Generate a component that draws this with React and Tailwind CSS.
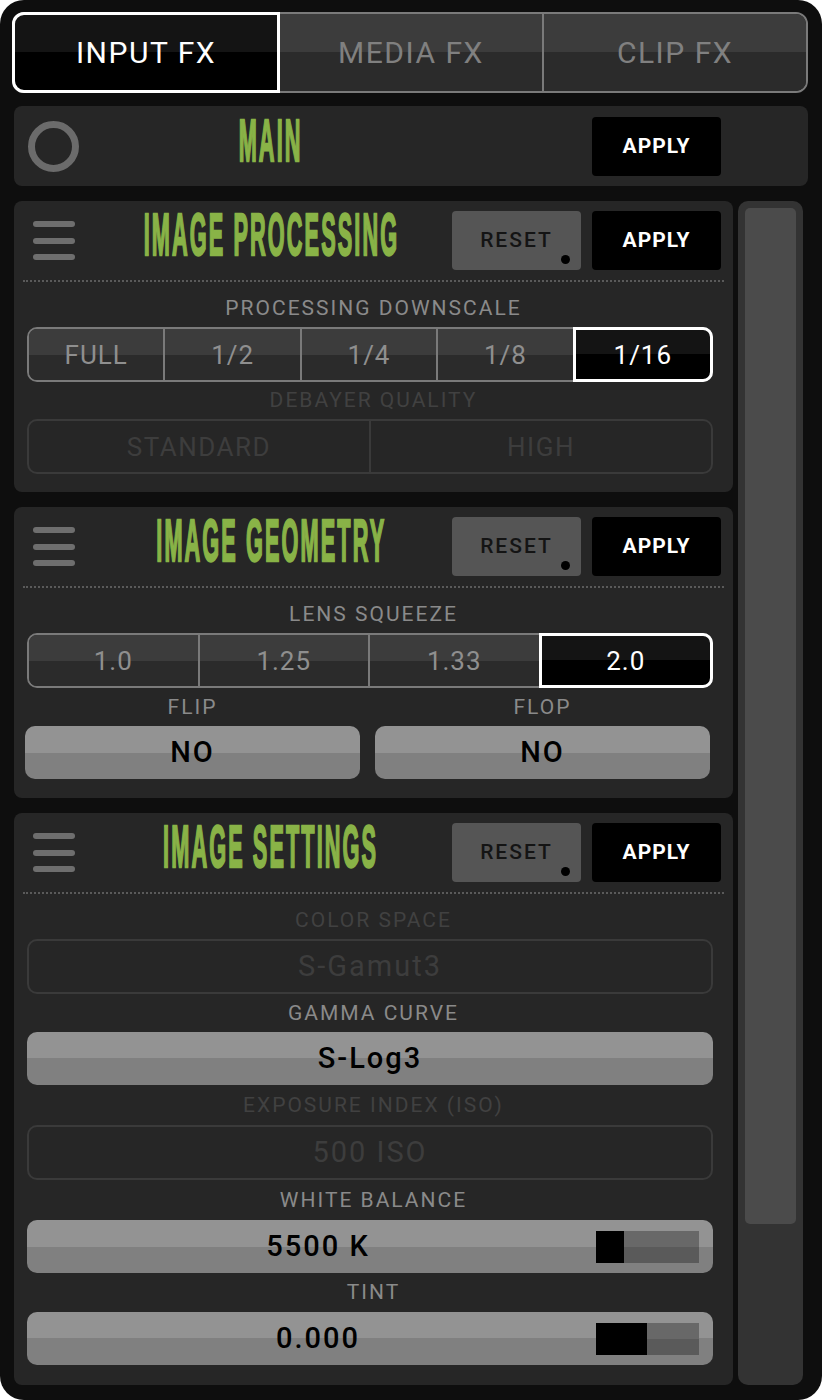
import React from "react";

const splitDark = "bg-[linear-gradient(to_bottom,#3c3c3c_50%,#2b2b2b_50%)]";
const splitBlack = "bg-[linear-gradient(to_bottom,#141414_50%,#000000_50%)]";
const splitLight = "bg-[linear-gradient(to_bottom,#939393_50%,#808080_50%)]";

function Title({ children }) {
  return (
    <div className="w-[362px] flex justify-center pb-[10px]">
      <span className="inline-block font-['Liberation_Sans',sans-serif] font-bold text-[31px] leading-none tracking-[3px] text-[#89b347] scale-x-[0.7] scale-y-[1.9] [-webkit-text-stroke:1.2px_#89b347] whitespace-nowrap">
        {children}
      </span>
    </div>
  );
}

function Hamburger() {
  return (
    <div className="w-[76px] pl-[19px] flex flex-col gap-[10.5px]">
      <div className="h-[6px] w-[42px] rounded-full bg-[#6e6e6e]" />
      <div className="h-[6px] w-[42px] rounded-full bg-[#6e6e6e]" />
      <div className="h-[6px] w-[42px] rounded-full bg-[#6e6e6e]" />
    </div>
  );
}

function ApplyButton() {
  return (
    <button className="w-[129px] h-[59px] rounded-[4px] bg-black text-white font-bold text-[21px] tracking-[1px] leading-none">
      APPLY
    </button>
  );
}

function ResetButton() {
  return (
    <button className="relative w-[129px] h-[59px] rounded-[4px] bg-[#555555] text-[#141414] font-medium text-[21px] tracking-[2px] leading-none">
      RESET
      <span className="absolute left-[109px] top-[44px] w-[9px] h-[9px] rounded-full bg-black" />
    </button>
  );
}

function PanelHeader({ title }) {
  return (
    <>
      <div className="flex items-center h-[59px] mt-[10px]">
        <Hamburger />
        <Title>{title}</Title>
        <ResetButton />
        <div className="w-[11px]" />
        <ApplyButton />
      </div>
      <div className="mt-[10px] ml-[9px] w-[701px] border-t-2 border-dotted border-[#5a5a5a]" />
      <div className="h-[7px]" />
    </>
  );
}

function Label({ children, h = "h-[38px]", disabled }) {
  return (
    <div
      className={
        h +
        " flex items-center justify-center text-[21px] leading-none tracking-[2px] " +
        (disabled ? "text-[#414141]" : "text-[#8a8a8a]")
      }
    >
      {children}
    </div>
  );
}

function Segmented({ items, selected }) {
  return (
    <div className="ml-[13px] w-[686px] h-[55px] flex rounded-[10px] border-2 border-[#7a7a7a]">
      {items.map((it, i) => {
        const isSel = i === selected;
        const isLast = i === items.length - 1;
        if (isSel) {
          return (
            <div
              key={it}
              className={
                "flex-1 -my-[2px] -mr-[2px] flex items-center justify-center border-[3px] border-white text-white text-[26px] tracking-[1px] leading-none " +
                splitBlack +
                (isLast ? " rounded-r-[10px]" : "")
              }
            >
              {it}
            </div>
          );
        }
        return (
          <div
            key={it}
            className={
              "flex-1 flex items-center justify-center text-[#8f8f8f] text-[26px] tracking-[1px] leading-none " +
              splitDark +
              (i === 0 ? " rounded-l-[8px]" : " border-l-2 border-[#7a7a7a]") +
              (isLast ? " rounded-r-[8px]" : "")
            }
          >
            {it}
          </div>
        );
      })}
    </div>
  );
}

function DisabledSegmented({ items }) {
  return (
    <div className="ml-[13px] w-[686px] h-[55px] flex rounded-[10px] border-2 border-[#3a3a3a]">
      {items.map((it, i) => (
        <div
          key={it}
          className={
            "flex-1 flex items-center justify-center text-[#3d3d3d] text-[26px] tracking-[1.5px] leading-none" +
            (i === 0 ? "" : " border-l-2 border-[#3a3a3a]")
          }
        >
          {it}
        </div>
      ))}
    </div>
  );
}

function DisabledBox({ children }) {
  return (
    <div className="ml-[13px] w-[686px] h-[55px] flex items-center justify-center rounded-[10px] border-2 border-[#3a3a3a] text-[#3d3d3d] text-[29px] tracking-[2px] leading-none">
      {children}
    </div>
  );
}

function LightButton({ children, className = "" }) {
  return (
    <div
      className={
        "h-[53px] flex items-center justify-center rounded-[10px] text-black font-medium text-[29px] tracking-[2px] leading-none " +
        splitLight +
        " " +
        className
      }
    >
      {children}
    </div>
  );
}

function SliderButton({ value, fill }) {
  return (
    <div className={"ml-[13px] w-[686px] h-[53px] flex items-center rounded-[10px] " + splitLight}>
      <span className="flex-1 pl-[13px] text-center text-black font-medium text-[29px] tracking-[2px] leading-none">
        {value}
      </span>
      <div className="mr-[14px] w-[103px] h-[32px] flex bg-[linear-gradient(to_bottom,#686868_50%,#5a5a5a_50%)]">
        <div className="h-full bg-black" style={{ width: fill }} />
      </div>
    </div>
  );
}

export default function App() {
  return (
    <div className="w-[822px] h-[1400px] bg-[#0e0e0e] rounded-[24px] pt-[12px] font-['Roboto',sans-serif] overflow-hidden">
      {/* tabs */}
      <div className="ml-[12px] w-[796px] h-[81px] flex rounded-[12px] border-2 border-[#7a7a7a]">
        <div className={"flex-1 -my-[2px] -ml-[2px] flex items-center justify-center rounded-l-[12px] border-[3px] border-white text-white text-[30px] tracking-[1.5px] leading-none " + splitBlack}>
          INPUT FX
        </div>
        <div className={"flex-1 flex items-center justify-center text-[#808080] text-[30px] tracking-[1.5px] leading-none " + splitDark}>
          MEDIA FX
        </div>
        <div className={"flex-1 flex items-center justify-center border-l-2 border-[#7a7a7a] rounded-r-[10px] text-[#808080] text-[30px] tracking-[1.5px] leading-none " + splitDark}>
          CLIP FX
        </div>
      </div>

      {/* main */}
      <div className="mt-[13px] ml-[14px] w-[794px] h-[80px] rounded-[8px] bg-[#262626] flex items-center">
        <div className="w-[76px] pl-[14px]">
          <div className="w-[51px] h-[51px] rounded-full border-[7px] border-[#6b6b6b]" />
        </div>
        <Title>MAIN</Title>
        <div className="w-[140px]" />
        <ApplyButton />
      </div>

      <div className="mt-[15px] ml-[14px] flex">
        <div className="w-[719px] flex flex-col gap-[15px]">
          {/* image processing */}
          <div className="h-[291px] rounded-[8px] bg-[#262626] flex flex-col">
            <PanelHeader title="IMAGE PROCESSING" />
            <Label>PROCESSING DOWNSCALE</Label>
            <Segmented items={["FULL", "1/2", "1/4", "1/8", "1/16"]} selected={4} />
            <Label h="h-[37px]" disabled>DEBAYER QUALITY</Label>
            <DisabledSegmented items={["STANDARD", "HIGH"]} />
          </div>

          {/* image geometry */}
          <div className="h-[291px] rounded-[8px] bg-[#262626] flex flex-col">
            <PanelHeader title="IMAGE GEOMETRY" />
            <Label>LENS SQUEEZE</Label>
            <Segmented items={["1.0", "1.25", "1.33", "2.0"]} selected={3} />
            <div className="ml-[11px] w-[685px] grid grid-cols-2 gap-x-[15px]">
              <Label>FLIP</Label>
              <Label>FLOP</Label>
              <LightButton>NO</LightButton>
              <LightButton>NO</LightButton>
            </div>
          </div>

          {/* image settings */}
          <div className="h-[572px] rounded-[8px] bg-[#262626] flex flex-col">
            <PanelHeader title="IMAGE SETTINGS" />
            <Label disabled>COLOR SPACE</Label>
            <DisabledBox>S-Gamut3</DisabledBox>
            <Label>GAMMA CURVE</Label>
            <LightButton className="ml-[13px] w-[686px]">S-Log3</LightButton>
            <Label h="h-[40px]" disabled>EXPOSURE INDEX (ISO)</Label>
            <DisabledBox>500 ISO</DisabledBox>
            <Label h="h-[40px]">WHITE BALANCE</Label>
            <SliderButton value="5500 K" fill="28px" />
            <Label h="h-[39px]">TINT</Label>
            <SliderButton value="0.000" fill="51px" />
          </div>
        </div>

        {/* scrollbar */}
        <div className="ml-[5px] w-[65px] h-[1184px] rounded-[10px] bg-[#333333] p-[7px]">
          <div className="h-[1016px] rounded-[5px] bg-[#4b4b4b]" />
        </div>
      </div>
    </div>
  );
}
